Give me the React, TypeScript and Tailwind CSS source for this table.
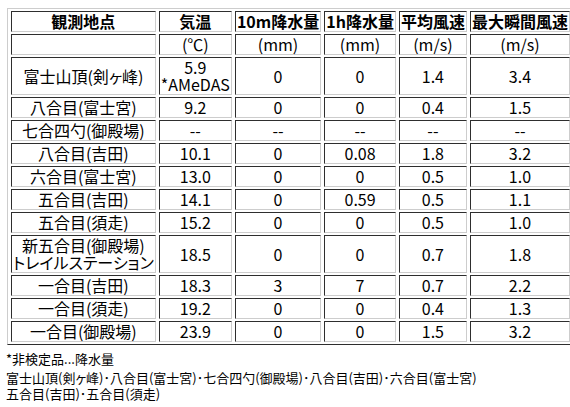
const rows: { name: React.ReactNode; temp: React.ReactNode; r10: string; r1h: string; avg: string; max: string }[] = [
  { name: '富士山頂(剣ヶ峰)', temp: <>5.9<br />*AMeDAS</>, r10: '0', r1h: '0', avg: '1.4', max: '3.4' },
  { name: '八合目(富士宮)', temp: '9.2', r10: '0', r1h: '0', avg: '0.4', max: '1.5' },
  { name: '七合四勺(御殿場)', temp: '--', r10: '--', r1h: '--', avg: '--', max: '--' },
  { name: '八合目(吉田)', temp: '10.1', r10: '0', r1h: '0.08', avg: '1.8', max: '3.2' },
  { name: '六合目(富士宮)', temp: '13.0', r10: '0', r1h: '0', avg: '0.5', max: '1.0' },
  { name: '五合目(吉田)', temp: '14.1', r10: '0', r1h: '0.59', avg: '0.5', max: '1.1' },
  { name: '五合目(須走)', temp: '15.2', r10: '0', r1h: '0', avg: '0.5', max: '1.0' },
  { name: <>新五合目(御殿場)<br />トレイルステーション</>, temp: '18.5', r10: '0', r1h: '0', avg: '0.7', max: '1.8' },
  { name: '一合目(吉田)', temp: '18.3', r10: '3', r1h: '7', avg: '0.7', max: '2.2' },
  { name: '一合目(須走)', temp: '19.2', r10: '0', r1h: '0', avg: '0.4', max: '1.3' },
  { name: '一合目(御殿場)', temp: '23.9', r10: '0', r1h: '0', avg: '1.5', max: '3.2' },
]

// inset cell border, as in an old border="1" table
const cell =
  'border border-t-[#2e2e2e] border-l-[#2e2e2e] border-r-[#cdcdcd] border-b-[#cdcdcd] p-px text-center whitespace-nowrap'

export default function App() {
  return (
    <div className="bg-white text-black font-['Noto_Sans_CJK_JP',sans-serif] [font-feature-settings:'palt'] pl-[7px] pt-[8px] pb-2">
      <table className="border-separate border-spacing-x-[3px] border-spacing-y-[2px] border border-t-[#cdcdcd] border-l-[#cdcdcd] border-r-[#2e2e2e] border-b-[#2e2e2e] text-[16px] leading-[17px]">
        <thead>
          <tr>
            <th className={`${cell} w-[137px] font-bold`}>観測地点</th>
            <th className={`${cell} w-[77px] font-bold`}>気温</th>
            <th className={`${cell} w-[85px] font-bold`}>10m降水量</th>
            <th className={`${cell} w-[70px] font-bold`}>1h降水量</th>
            <th className={`${cell} w-[68px] font-bold`}>平均風速</th>
            <th className={`${cell} w-[98px] font-bold`}>最大瞬間風速</th>
          </tr>
          <tr>
            <td className={cell}></td>
            <td className={cell}>(℃)</td>
            <td className={cell}>(mm)</td>
            <td className={cell}>(mm)</td>
            <td className={cell}>(m/s)</td>
            <td className={cell}>(m/s)</td>
          </tr>
        </thead>
        <tbody>
          {rows.map((r, i) => (
            <tr key={i}>
              <td className={cell}>{r.name}</td>
              <td className={cell}>{r.temp}</td>
              <td className={cell}>{r.r10}</td>
              <td className={cell}>{r.r1h}</td>
              <td className={cell}>{r.avg}</td>
              <td className={cell}>{r.max}</td>
            </tr>
          ))}
        </tbody>
      </table>

      <div className="text-[13px] leading-[16px] mt-[6px] -ml-px">
        <p className="mb-[3px]">*非検定品...降水量</p>
        <p>富士山頂(剣ヶ峰)･八合目(富士宮)･七合四勺(御殿場)･八合目(吉田)･六合目(富士宮)</p>
        <p>五合目(吉田)･五合目(須走)</p>
      </div>
    </div>
  )
}
